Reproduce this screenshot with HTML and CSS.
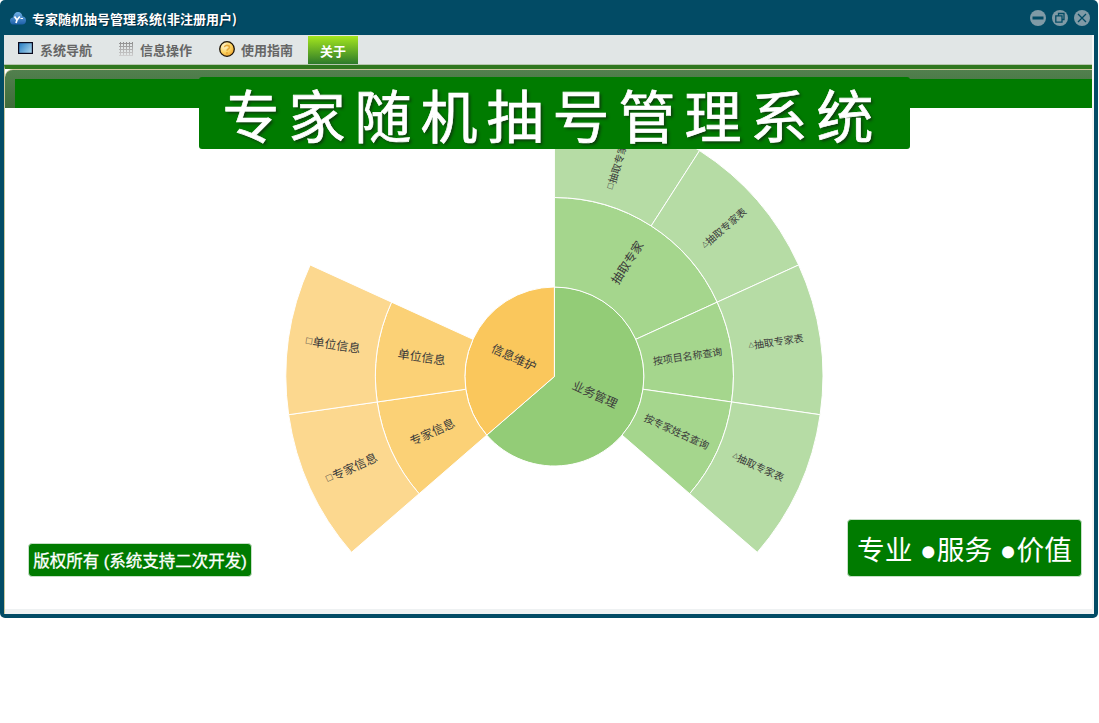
FILE: index.html
```html
<!DOCTYPE html>
<html lang="zh-CN">
<head>
<meta charset="utf-8">
<title>专家随机抽号管理系统</title>
<link rel="stylesheet" href="styles.css">
</head>
<body>
<div class="window">
  <header class="titlebar">
    <svg class="app-icon" viewBox="0 0 16 14" width="16" height="14">
      <defs><linearGradient id="cloud" x1="0" x2="0" y1="0" y2="1"><stop offset="0" stop-color="#6fb0e6"/><stop offset="1" stop-color="#1d5fa8"/></linearGradient></defs>
      <path fill="url(#cloud)" d="M3 13.500C1 13.500 0 11.500 0 9.500C0 7.500 1.500 6.500 3 6.500C3.500 3 5.500 1 8 1C10.500 1 12 2.500 12.500 5.500C14.500 5.500 16 7 16 9.500C16 12 14.500 13.500 12 13.500Z"/>
      <path class="app-y" d="M4.500 5.500L7 9L6 12M9.800 5.500L7 9"/>
      <path class="app-f" d="M10.500 7.500H13"/>
    </svg>
    <span class="title-text">专家随机抽号管理系统(非注册用户)</span>
    <div class="win-buttons">
      <svg class="win-btn" viewBox="0 0 16 16"><circle class="win-disc" cx="8" cy="8" r="8"/><rect class="win-glyph-fill" x="2.500" y="6.500" width="11" height="3"/></svg>
      <svg class="win-btn" viewBox="0 0 16 16"><circle class="win-disc" cx="8" cy="8" r="8"/><path class="win-glyph" d="M6.500 5.500V3.500H12V9.500H10M3.800 5.800H10V12.200H3.800Z"/></svg>
      <svg class="win-btn" viewBox="0 0 16 16"><circle class="win-disc" cx="8" cy="8" r="8"/><path class="win-glyph" d="M4 4L12 12M12 4L4 12"/></svg>
    </div>
  </header>
  <div class="pane">
    <nav class="toolbar">
      <div class="tool tool-nav">
        <svg class="tool-icon" viewBox="0 0 15 12" width="15" height="12">
          <defs><linearGradient id="screen" x1="0" x2="1" y1="0.200" y2="0.800"><stop offset="0" stop-color="#2a80c4"/><stop offset="1" stop-color="#a9d4ec"/></linearGradient></defs>
          <rect x="0.600" y="0.600" width="13.800" height="10.800" fill="url(#screen)" stroke="#0a0a1e" stroke-width="1.200"/>
        </svg>
        <span>系统导航</span>
      </div>
      <div class="tool tool-info">
        <svg class="tool-icon" viewBox="0 0 14 14" width="14" height="14">
          <defs><linearGradient id="fade" gradientUnits="userSpaceOnUse" x1="0" x2="0" y1="0" y2="14"><stop offset="0" stop-color="#8e8e8e"/><stop offset="1" stop-color="#cfcfcf"/></linearGradient></defs>
          <path stroke="url(#fade)" fill="none" d="M1.500 0V14M4.500 0V14M7.500 0V14M10.500 0V14M13.500 0V14M0 1.500H14M0 4.500H14M0 7.500H14M0 10.500H14M0 13.500H14"/>
        </svg>
        <span>信息操作</span>
      </div>
      <div class="tool tool-help">
        <svg class="tool-icon" viewBox="0 0 16 16" width="16" height="16">
          <defs><radialGradient id="ball" cx="0.350" cy="0.300" r="0.800"><stop offset="0" stop-color="#fff8d8"/><stop offset="0.550" stop-color="#fbd25f"/><stop offset="1" stop-color="#ec9a24"/></radialGradient></defs>
          <circle cx="8" cy="8" r="7.300" fill="url(#ball)" stroke="#1c1408" stroke-width="1.300"/>
          <path d="M5.500 6.200C5.500 3.800 10.500 3.800 10.500 6.300C10.500 8 8 7.800 8 9.800" fill="none" stroke="#e6a93a" stroke-width="1.600"/>
          <circle cx="8" cy="12" r="1" fill="#e6a93a"/>
        </svg>
        <span>使用指南</span>
      </div>
      <div class="tab-active">关于</div>
    </nav>
    <main class="content">
      <div class="content-head"><div class="content-head-fill"></div></div>
      <div class="stage">
        <svg class="sunburst" viewBox="5.600 108 1087 501" width="1087" height="501">
          <path class="seg c1" d="M555 376.500L555 287A89.500 89.500 0 1 1 487.360 435.110Z"/>
          <path class="seg o1" d="M555 376.500L487.360 435.110A89.500 89.500 0 0 1 555 287Z"/>

          <path class="seg c2" d="M555 287L555 197.500A179 179 0 0 1 717.820 302.140L636.410 339.320A89.500 89.500 0 0 0 555 287Z"/>
          <path class="seg c2" d="M636.410 339.320L717.820 302.140A179 179 0 0 1 732.170 401.970L643.590 389.240A89.500 89.500 0 0 0 636.410 339.320Z"/>
          <path class="seg c2" d="M643.590 389.240L732.170 401.970A179 179 0 0 1 690.270 493.730L622.640 435.110A89.500 89.500 0 0 0 643.590 389.240Z"/>
          <path class="seg o2" d="M487.360 435.110L419.730 493.730A179 179 0 0 1 377.830 401.970L466.410 389.240A89.500 89.500 0 0 0 487.360 435.110Z"/>
          <path class="seg o2" d="M466.410 389.240L377.830 401.970A179 179 0 0 1 392.180 302.140L473.590 339.320A89.500 89.500 0 0 0 466.410 389.240Z"/>

          <path class="seg c3" d="M555 197.500L555 108A268.500 268.500 0 0 1 700.150 150.610L651.770 225.910A179 179 0 0 0 555 197.500Z"/>
          <path class="seg c3" d="M651.770 225.910L700.150 150.610A268.500 268.500 0 0 1 799.230 264.960L717.820 302.140A179 179 0 0 0 651.770 225.910Z"/>
          <path class="seg c3" d="M717.820 302.140L799.230 264.960A268.500 268.500 0 0 1 820.760 414.710L732.170 401.970A179 179 0 0 0 717.820 302.140Z"/>
          <path class="seg c3" d="M732.170 401.970L820.760 414.710A268.500 268.500 0 0 1 757.900 552.340L690.270 493.730A179 179 0 0 0 732.170 401.970Z"/>
          <path class="seg o3" d="M419.730 493.730L352.100 552.340A268.500 268.500 0 0 1 289.240 414.710L377.830 401.970A179 179 0 0 0 419.730 493.730Z"/>
          <path class="seg o3" d="M377.830 401.970L289.240 414.710A268.500 268.500 0 0 1 310.770 264.960L392.180 302.140A179 179 0 0 0 377.830 401.970Z"/>

          <text class="lbl" transform="translate(596 393.500) rotate(24.500)">业务管理</text>
          <text class="lbl" transform="translate(515 356.500) rotate(24.500)">信息维护</text>
          <text class="lbl" transform="translate(627 262) rotate(-57.300)">抽取专家</text>
          <text class="lbl small" transform="translate(688 355.500) rotate(-8.200)">按项目名称查询</text>
          <text class="lbl small" transform="translate(677.500 431) rotate(24.500)">按专家姓名查询</text>
          <text class="lbl" transform="translate(422.500 356) rotate(8.200)">单位信息</text>
          <text class="lbl" transform="translate(432.500 431) rotate(-24.500)">专家信息</text>
          <text class="lbl small" transform="translate(618 162) rotate(-73.600)"><tspan class="mark">□</tspan>抽取专家表</text>
          <text class="lbl small" transform="translate(724 227.500) rotate(-40.900)"><tspan class="mark">△</tspan>抽取专家表</text>
          <text class="lbl small" transform="translate(776.500 341) rotate(-8.200)"><tspan class="mark">△</tspan>抽取专家表</text>
          <text class="lbl small" transform="translate(759 466) rotate(24.500)"><tspan class="mark">△</tspan>抽取专家表</text>
          <text class="lbl" transform="translate(333.500 343.500) rotate(8.200)"><tspan class="mark">□</tspan>单位信息</text>
          <text class="lbl" transform="translate(351.500 467) rotate(-24.500)"><tspan class="mark">□</tspan>专家信息</text>
        </svg>
        <div class="footer-strip"></div>
      </div>
      <h1 class="banner">专家随机抽号管理系统</h1>
      <div class="badge badge-left">版权所有 (系统支持二次开发)</div>
      <div class="badge badge-right">专业 ●服务 ●价值</div>
    </main>
  </div>
</div>
</body>
</html>
```
FILE: styles.css
```css
* { box-sizing: border-box; }
html, body { margin: 0; padding: 0; background: #fff; }
body { font-family: "Noto Sans CJK SC", "Liberation Sans", sans-serif; }

.window {
  width: 1098px;
  height: 618px;
  background: #024b65;
  border-radius: 5px;
  padding: 0 4px 4px 4px;
  display: flex;
  flex-direction: column;
}

.titlebar {
  height: 35px;
  flex: none;
  display: flex;
  align-items: center;
  padding: 1px 4px 0 6px;
}
.app-icon { margin-right: 6px; }
.app-y { fill: none; stroke: #fff; stroke-width: 1.700; }
.app-f { fill: none; stroke: #fff; stroke-width: 1; }
.title-text {
  color: #fff;
  font-size: 13px;
  font-weight: 700;
  text-shadow: 1px 1px 1px #04263a;
  white-space: nowrap;
}
.win-buttons { margin-left: auto; display: flex; gap: 6px; margin-top: -1px; }
.win-btn { width: 16px; height: 16px; display: block; }
.win-disc { fill: #7f9aa6; }
.win-glyph { fill: none; stroke: #024b65; stroke-width: 1.300; }
.win-glyph-fill { fill: #024b65; }

.pane {
  flex: 1;
  min-height: 0;
  display: flex;
  flex-direction: column;
  background: #f4f6f6;
  padding-right: 2px;
}

.toolbar {
  height: 30px;
  flex: none;
  background: #e1e6e6;
  border-bottom: 1px solid #b6c6ae;
  display: flex;
  align-items: stretch;
  padding-left: 14px;
}
.tool {
  display: flex;
  align-items: center;
  color: #666;
  font-size: 13px;
  font-weight: 700;
}
.tool-icon { flex: none; }
.tool-nav { margin-right: 27px; }
.tool-nav .tool-icon { margin-right: 7px; margin-top: -3px; }
.tool-info { margin-right: 27px; }
.tool-info .tool-icon { margin-right: 7px; margin-top: -1px; }
.tool-help { margin-right: 15px; }
.tool-help .tool-icon { margin-right: 6px; margin-top: -1px; }

.tab-active {
  width: 50px;
  margin-top: 1px;
  background: linear-gradient(#a4e61e, #2d7a2a);
  color: #fff;
  font-size: 13px;
  font-weight: 700;
  display: flex;
  align-items: center;
  justify-content: center;
}

.content {
  position: relative;
  flex: 1;
  min-height: 0;
  background: #fff;
  border-top: 4px solid #30771f;
  border-left: 1px solid #c8c69c;
  display: flex;
  flex-direction: column;
}
.content-head {
  height: 39px;
  flex: none;
  border-top: 1px solid #c8c69c;
  border-radius: 8px 0 0 0;
  background: linear-gradient(#52804e, #3f6b3a);
  padding: 9px 0 0 10px;
  display: flex;
}
.content-head-fill { flex: 1; background: #007b00; }

.stage {
  flex: 1;
  min-height: 0;
  display: flex;
  flex-direction: column;
  overflow: hidden;
}
.sunburst { display: block; flex: none; }
.footer-strip { height: 5px; flex: none; background: #eef1f2; margin-top: auto; }

.seg { stroke: #fff; stroke-width: 1; }
.c1 { fill: #93cc77; }
.c2 { fill: #a5d68d; }
.c3 { fill: #b6dca5; }
.o1 { fill: #fac75c; }
.o2 { fill: #fbd176; }
.o3 { fill: #fcd88f; }
.lbl {
  font-size: 12px;
  fill: #3a3a3a;
  text-anchor: middle;
  dominant-baseline: central;
}
.lbl.small { font-size: 10px; }
.mark { font-family: "DejaVu Sans", sans-serif; font-size: 8px; fill: #444; }
.lbl.small .mark { font-size: 7px; }

.banner {
  position: absolute;
  left: 194px;
  top: 8px;
  width: 711px;
  height: 72px;
  margin: 0;
  padding-right: 4px;
  background: #007b00;
  border-radius: 3px;
  color: #fff;
  font-size: 57px;
  font-weight: 400;
  letter-spacing: 9px;
  line-height: 72px;
  text-align: center;
  white-space: nowrap;
  -webkit-text-stroke: 0.7px #fff;
  text-shadow: 2px 2px 3px #0d3b0d;
}
.badge {
  position: absolute;
  background: #007b00;
  border: 1px solid #c6dfc6;
  border-radius: 4px;
  color: #fff;
  white-space: nowrap;
  display: flex;
  align-items: center;
  justify-content: center;
  font-family: "Liberation Sans", "Noto Sans CJK SC", sans-serif;
}
.badge-left {
  left: 23px;
  top: 474px;
  width: 224px;
  height: 34px;
  font-size: 16.500px;
  -webkit-text-stroke: 0.3px #fff;
}
.badge-right {
  left: 842px;
  top: 450px;
  width: 235px;
  height: 58px;
  font-size: 27.700px;
}
```
